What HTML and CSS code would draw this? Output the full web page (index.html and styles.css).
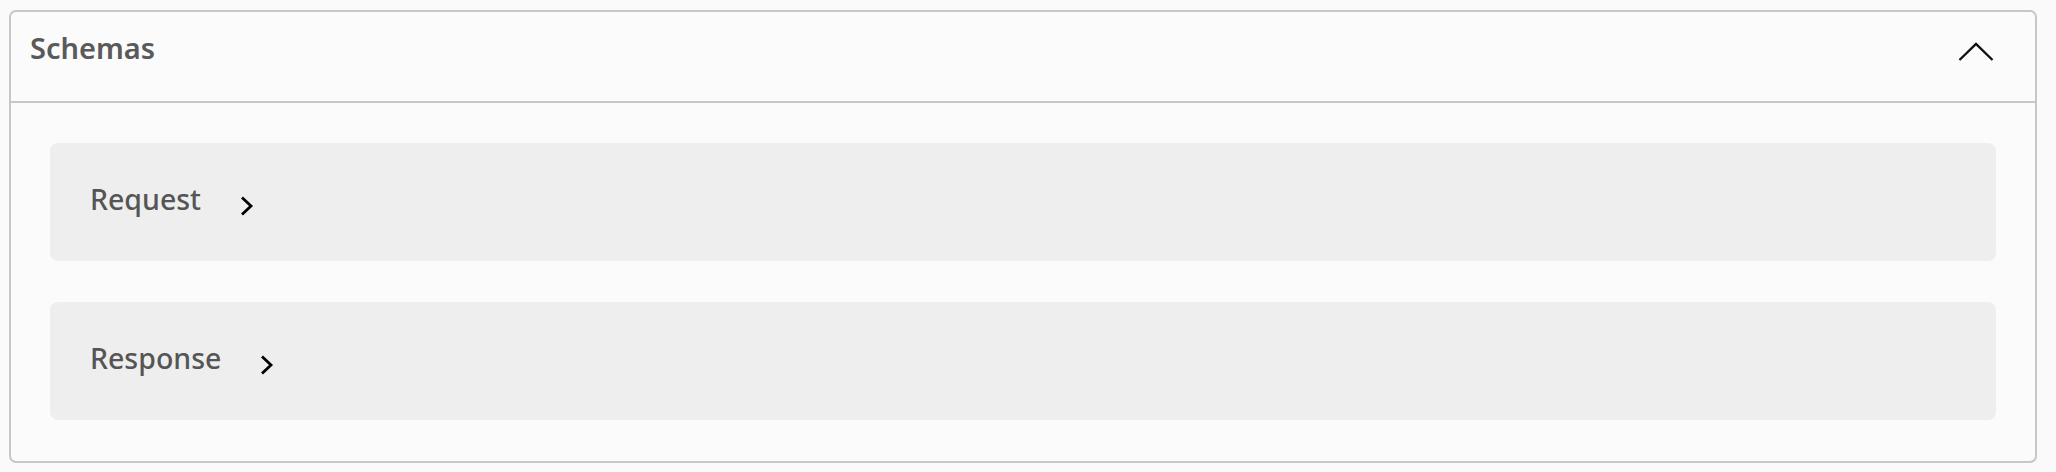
FILE: index.html
```html
<!DOCTYPE html>
<html lang="en">
<head>
<meta charset="utf-8">
<title>Schemas</title>
<link rel="stylesheet" href="styles.css">
</head>
<body>
<section class="panel">
  <header class="panel-header">
    <h2 class="panel-title">Schemas</h2>
    <svg class="collapse-icon" width="36" height="20" viewBox="0 0 36 20" aria-hidden="true">
      <polyline points="1.5,18 18,2 34.5,18" fill="none" stroke="#111" stroke-width="2.4" stroke-linejoin="miter"/>
    </svg>
  </header>
  <div class="panel-body">
    <div class="schema-row">
      <span class="schema-label">Request</span>
      <svg class="expand-icon" width="14" height="20" viewBox="0 0 14 20" aria-hidden="true">
        <polyline points="2,1.5 11,10 2,18.5" fill="none" stroke="#000" stroke-width="2.8"/>
      </svg>
    </div>
    <div class="schema-row">
      <span class="schema-label">Response</span>
      <svg class="expand-icon" width="14" height="20" viewBox="0 0 14 20" aria-hidden="true">
        <polyline points="2,1.5 11,10 2,18.5" fill="none" stroke="#000" stroke-width="2.8"/>
      </svg>
    </div>
  </div>
</section>
</body>
</html>
```

FILE: styles.css
```css
html, body {
  margin: 0;
  padding: 0;
  background: #fafafa;
}

body {
  font-family: "Noto Sans", "Open Sans", sans-serif;
  padding: 10px 19px 0 9px;
}

.panel {
  border: 2px solid #c6c6cb;
  border-radius: 7px;
  background: #fbfbfb;
}

.panel-header {
  height: 91px;
  box-sizing: border-box;
  border-bottom: 2px solid #c6c6cb;
  display: flex;
  align-items: flex-start;
  justify-content: space-between;
  padding: 16px 41px 0 19px;
}

.panel-title {
  margin: 0;
  font-size: 29px;
  font-weight: 600;
  color: #5a5a5a;
  line-height: normal;
}

.collapse-icon {
  margin-top: 14px;
}

.panel-body {
  display: flex;
  flex-direction: column;
  gap: 41px;
  padding: 40px 39px 41px;
}

.schema-row {
  height: 118px;
  box-sizing: border-box;
  background: #eeeeee;
  border-radius: 8px;
  display: flex;
  align-items: center;
  padding: 0 38px 6px 40px;
}

.schema-label {
  font-size: 28.5px;
  font-weight: 500;
  color: #555555;
  line-height: normal;
}

.expand-icon {
  margin-left: 39px;
  margin-top: 14px;
}
```
